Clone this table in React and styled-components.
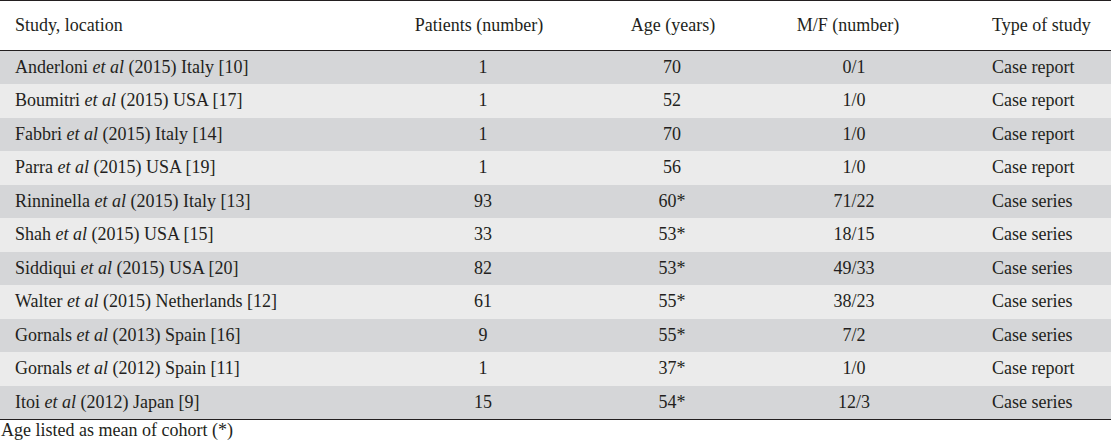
import React from 'react';
import styled, { createGlobalStyle } from 'styled-components';

const GlobalStyle = createGlobalStyle`
  html, body {
    margin: 0;
    padding: 0;
    background: #ffffff;
  }
  body {
    font-family: "Liberation Serif", "Times New Roman", serif;
    color: #231f20;
  }
`;

const Wrapper = styled.div`
  width: 1111px;
`;

const Table = styled.table`
  width: 100%;
  border-collapse: collapse;
  table-layout: fixed;
  font-size: 18px;
  border-top: 1px solid #231f20;
  border-bottom: 1px solid #231f20;
`;

const HeadCell = styled.th`
  font-weight: normal;
  height: 49px;
  padding: 0 ${p => p.$right || 0}px 0 ${p => p.$left || 0}px;
  text-align: ${p => p.$align || 'center'};
  border-bottom: 1px solid #231f20;
  white-space: nowrap;
`;

const Row = styled.tr`
  height: 33.5px;
  background: ${p => (p.$shade ? '#d5d6d8' : '#ebebeb')};
`;

const Cell = styled.td`
  padding: 0 ${p => p.$right || 0}px 0 ${p => p.$left || 0}px;
  text-align: ${p => p.$align || 'center'};
  white-space: nowrap;
`;

const Footnote = styled.div`
  font-size: 18px;
  padding-left: 1px;
  line-height: 21px;
`;

const rows = [
  ['Anderloni', '(2015) Italy [10]', '1', '70', '0/1', 'Case report'],
  ['Boumitri', '(2015) USA [17]', '1', '52', '1/0', 'Case report'],
  ['Fabbri', '(2015) Italy [14]', '1', '70', '1/0', 'Case report'],
  ['Parra', '(2015) USA [19]', '1', '56', '1/0', 'Case report'],
  ['Rinninella', '(2015) Italy [13]', '93', '60*', '71/22', 'Case series'],
  ['Shah', '(2015) USA [15]', '33', '53*', '18/15', 'Case series'],
  ['Siddiqui', '(2015) USA [20]', '82', '53*', '49/33', 'Case series'],
  ['Walter', '(2015) Netherlands [12]', '61', '55*', '38/23', 'Case series'],
  ['Gornals', '(2013) Spain [16]', '9', '55*', '7/2', 'Case series'],
  ['Gornals', '(2012) Spain [11]', '1', '37*', '1/0', 'Case report'],
  ['Itoi', '(2012) Japan [9]', '15', '54*', '12/3', 'Case series'],
];

export default function App() {
  return (
    <Wrapper>
      <GlobalStyle />
      <Table>
        <colgroup>
          <col style={{ width: 390 }} />
          <col style={{ width: 182 }} />
          <col style={{ width: 196 }} />
          <col style={{ width: 168 }} />
          <col />
        </colgroup>
        <thead>
          <tr>
            <HeadCell $align="left" $left={15}>Study, location</HeadCell>
            <HeadCell $right={4}>Patients (number)</HeadCell>
            <HeadCell $left={6}>Age (years)</HeadCell>
            <HeadCell $right={8}>M/F (number)</HeadCell>
            <HeadCell $align="left" $left={56}>Type of study</HeadCell>
          </tr>
        </thead>
        <tbody>
          {rows.map(([name, rest, patients, age, mf, type], i) => (
            <Row key={i} $shade={i % 2 === 0}>
              <Cell $align="left" $left={15}>
                {name} <i>et al</i> {rest}
              </Cell>
              <Cell $left={4}>{patients}</Cell>
              <Cell $left={4}>{age}</Cell>
              <Cell $left={4}>{mf}</Cell>
              <Cell $align="left" $left={56}>{type}</Cell>
            </Row>
          ))}
        </tbody>
      </Table>
      <Footnote>Age listed as mean of cohort (*)</Footnote>
    </Wrapper>
  );
}
